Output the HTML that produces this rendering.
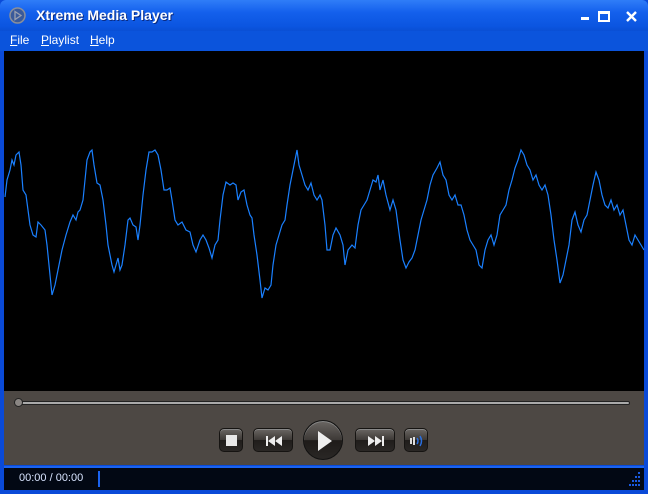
<!DOCTYPE html>
<html><head><meta charset="utf-8"><style>
*{margin:0;padding:0;box-sizing:border-box}
body{width:648px;height:494px;overflow:hidden;background:#0a4ad8;font-family:"Liberation Sans",sans-serif;position:relative}
#title{position:absolute;left:0;top:0;width:648px;height:31px;background:linear-gradient(#2f7df8 0%,#1460ec 40%,#0b55e0 85%,#0a4fd4 100%);border-radius:6px 6px 0 0}
#title .t{position:absolute;left:36px;top:7px;color:#fff;font-weight:bold;font-size:14px;text-shadow:1px 1px 0 #0a2a80}
#menu{position:absolute;left:0;top:31px;width:648px;height:20px;background:#0b54dc}
#menu span{position:absolute;top:2px;color:#fff;font-size:12px}
#menu u{text-decoration:underline}
#video{position:absolute;left:4px;top:51px;width:640px;height:340px;background:#000}
#ctrl{position:absolute;left:4px;top:391px;width:640px;height:74px;background:#4d4844}
#status{position:absolute;left:4px;top:466px;width:640px;height:24px;background:#020814;border-top:2px solid #1b63f0}
.btn{position:absolute;background:linear-gradient(#6a6663,#3d3936 50%,#201d1b 51%,#2a2725);border:1px solid #161412;border-radius:5px;box-shadow:inset 0 1px 0 #888}
</style></head><body>
<div id="title">
<svg style="position:absolute;left:9px;top:7px" width="17" height="17"><circle cx="8.5" cy="8.5" r="7.5" fill="#3a5a9a" stroke="#8a8f9a" stroke-width="1.5"/><path d="M6 4.5 L12 8.5 L6 12.5 Z" fill="none" stroke="#9aa0b0" stroke-width="1.3"/></svg>
<div class="t">Xtreme Media Player</div>
<div style="position:absolute;left:581px;top:17px;width:8px;height:3px;background:#fff"></div>
<div style="position:absolute;left:598px;top:11px;width:12px;height:11px;border:2px solid #fff;border-top-width:3px"></div>
<svg style="position:absolute;left:626px;top:11px" width="11" height="11"><path d="M1 1L10 10M10 1L1 10" stroke="#fff" stroke-width="2.4"/></svg>
</div>
<div id="menu"><span style="left:10px"><u>F</u>ile</span><span style="left:41px"><u>P</u>laylist</span><span style="left:90px"><u>H</u>elp</span></div>
<div id="video">
<svg width="640" height="340" style="position:absolute;left:-4px;top:-51px;overflow:visible">
<polyline fill="none" stroke="#1a80ff" stroke-width="1.2" points="5,197 7,180 10,170 12,160 14,165 16,155 19,152 21,165 23,190 26,195 28,210 30,225 33,235 36,237 38,222 41,225 45,230 47,245 50,275 52,295 55,285 58,270 62,250 66,235 70,222 73,215 76,220 78,212 80,210 83,200 85,180 87,160 90,152 92,150 94,165 97,183 100,185 103,200 106,225 108,245 112,265 114,272 116,265 118,258 120,270 122,265 125,245 128,220 130,218 133,225 136,227 138,240 140,225 143,195 146,170 149,152 152,152 155,150 158,155 161,170 164,190 167,190 170,188 172,200 175,220 178,225 182,222 186,230 190,232 193,245 196,252 200,240 203,235 206,240 209,248 212,258 215,245 218,240 220,220 223,195 226,182 230,185 233,183 236,185 238,200 241,192 244,190 247,205 250,215 252,218 254,235 257,255 260,280 262,298 265,288 268,290 271,285 273,265 276,245 279,235 282,225 285,220 287,205 290,185 292,175 295,160 297,150 299,165 302,175 305,185 308,190 311,183 314,195 317,200 320,195 322,200 325,225 327,250 330,250 333,235 336,228 340,235 343,245 345,265 348,250 352,245 355,248 358,225 361,210 364,205 367,200 370,190 373,180 376,182 378,175 380,190 383,180 386,195 390,210 393,200 396,210 400,240 403,260 406,268 409,262 412,258 415,250 418,235 421,220 424,210 427,200 430,185 433,175 437,168 440,162 443,175 446,180 449,195 452,200 455,195 458,205 461,205 464,215 467,230 470,240 473,245 476,250 479,265 482,268 485,250 488,240 491,235 494,245 497,235 500,215 503,210 506,205 509,190 512,180 515,168 518,160 521,150 524,155 527,165 530,170 533,180 536,175 539,185 542,190 545,185 548,195 551,215 554,240 557,260 560,283 563,275 566,260 569,245 572,220 575,212 578,225 581,232 584,220 587,215 590,200 593,185 596,172 599,180 602,195 605,205 608,208 611,200 614,210 617,205 620,215 623,210 626,225 629,240 632,245 635,235 638,240 641,245 644,250"/>
</svg>
</div>
<div id="ctrl">
<div style="position:absolute;left:12px;top:10px;width:614px;height:4px;background:#aaa;border:1px solid #222;border-radius:2px"></div>
<div style="position:absolute;left:10px;top:7px;width:9px;height:9px;border-radius:50%;background:#8a8683;border:1px solid #222"></div>
<div class="btn" style="left:215px;top:37px;width:24px;height:24px"><div style="position:absolute;left:6px;top:6px;width:11px;height:11px;background:#e8e8e8"></div></div>
<div class="btn" style="left:249px;top:37px;width:40px;height:24px"><svg width="40" height="24" style="position:absolute;left:0;top:0"><path d="M12 7h2v10h-2zM21 7v10l-7-5zM28 7v10l-7-5z" fill="#eee"/></svg></div>
<div style="position:absolute;left:299px;top:29px;width:40px;height:40px;border-radius:50%;background:linear-gradient(#6a6663,#3d3936 50%,#1e1b19 51%,#2a2725);border:1px solid #111;box-shadow:inset 0 1px 0 #888"><svg width="40" height="40" style="position:absolute;left:0;top:0"><path d="M14 10L28 20L14 30Z" fill="#eee"/></svg></div>
<div class="btn" style="left:351px;top:37px;width:40px;height:24px"><svg width="40" height="24" style="position:absolute;left:0;top:0"><path d="M12 7v10l7-5zM19 7v10l7-5zM26 7h2v10h-2z" fill="#eee"/></svg></div>
<div class="btn" style="left:400px;top:37px;width:24px;height:24px"><svg width="24" height="24" style="position:absolute;left:0;top:0"><path d="M5 9h2v6h-2zM8 8h2v8h-2z" fill="#ddd"/><path d="M12 9q2 3 0 6M15 7q3 5 0 10" fill="none" stroke="#2a6fe0" stroke-width="1.5"/></svg></div>
</div>
<div id="status">
<div style="position:absolute;left:15px;top:4px;color:#d8e4ff;font-size:11px">00:00 / 00:00</div>
<div style="position:absolute;left:94px;top:3px;width:2px;height:16px;background:#1b63f0"></div>
<svg style="position:absolute;left:622px;top:4px" width="16" height="16"><g fill="#1a5ae0"><rect x="12" y="0" width="2" height="2"/><rect x="9" y="4" width="2" height="2"/><rect x="12" y="4" width="2" height="2"/><rect x="6" y="8" width="2" height="2"/><rect x="9" y="8" width="2" height="2"/><rect x="12" y="8" width="2" height="2"/><rect x="3" y="12" width="2" height="2"/><rect x="6" y="12" width="2" height="2"/><rect x="9" y="12" width="2" height="2"/><rect x="12" y="12" width="2" height="2"/></g></svg>
</div>
</body></html>
